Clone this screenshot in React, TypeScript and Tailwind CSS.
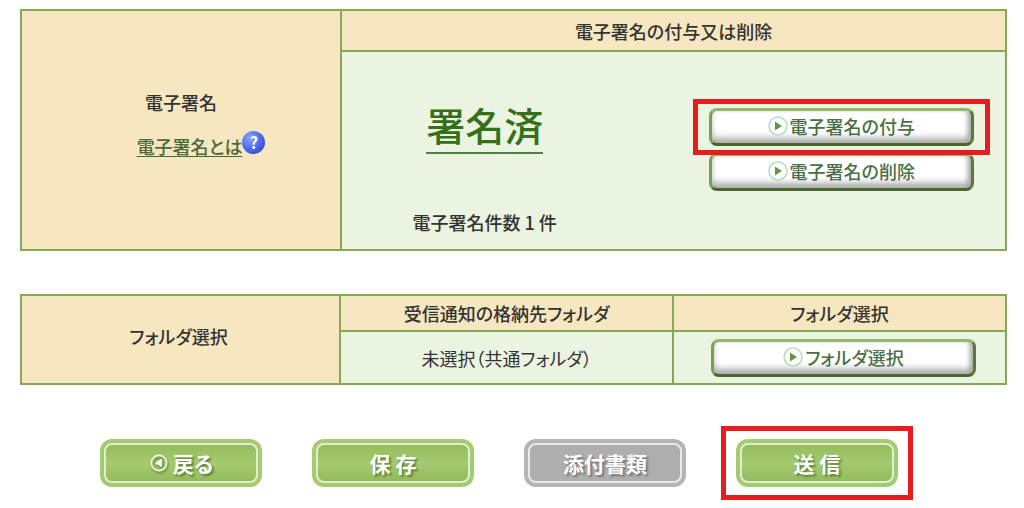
import React from 'react';

const headCell = 'border-2 border-[#86a956] bg-[#f7e7c0] font-medium';
const bodyCell = 'border-2 border-[#86a956] bg-[#ebf3e1]';

function PlayIcon() {
  return (
    <svg className="w-5 h-5 shrink-0" viewBox="0 0 20 20" aria-hidden="true">
      <circle cx="10" cy="10" r="9" fill="#fff" stroke="#b5dcc2" strokeWidth="1.5" />
      <path d="M7 5.5v9l7-4.5z" fill="#659440" />
    </svg>
  );
}

function BackIcon() {
  return (
    <svg className="w-5 h-5 shrink-0 drop-shadow-[1px_2px_1px_#5d8238]" viewBox="0 0 20 20" aria-hidden="true">
      <circle cx="10" cy="10" r="7.6" fill="none" stroke="#f4f9ec" strokeWidth="1.6" />
      <path d="M12.8 5.8v8.4L6 10z" fill="#fff" />
    </svg>
  );
}

function PanelButton({ children }: { children: React.ReactNode }) {
  return (
    <button
      type="button"
      className="w-[265px] h-[38px] pb-[2px] flex items-center justify-center gap-[2px] rounded-lg border-[3px] border-t-[#95b46f] border-l-[#7d9f53] border-r-[#587a38] border-b-[#49662c] bg-white shadow-[inset_-3px_-2px_5px_#aaa,inset_0_-6px_6px_#c4c4c4] text-[18px] font-medium text-[#4b6e45]"
    >
      <PlayIcon />
      {children}
    </button>
  );
}

function ActionButton({ children, disabled }: { children: React.ReactNode; disabled?: boolean }) {
  return (
    <button
      type="button"
      disabled={disabled}
      className={
        disabled
          ? 'w-[162px] h-12 p-1 rounded-xl bg-[#b5b5b5] text-white'
          : 'w-[162px] h-12 p-1 rounded-xl bg-[#a5cb72] text-white'
      }
    >
      <span
        className={
          disabled
            ? 'h-full flex items-center justify-center rounded-lg border-2 border-[#e9e9e9] bg-[#aeaeae] text-[21px] font-bold [text-shadow:2px_2px_2px_#777]'
            : 'h-full flex items-center justify-center gap-1 rounded-lg border-2 border-[#e0eece] bg-linear-to-b from-[#94bd5c] via-[#a5ca70] to-[#94bb5c] text-[21px] font-bold [text-shadow:2px_2px_2px_#5d8238]'
        }
      >
        {children}
      </span>
    </button>
  );
}

export default function App() {
  return (
    <main className="bg-white pt-[9px] pb-5 pl-5 pr-[17px] font-['Noto_Sans_CJK_JP',sans-serif] [font-feature-settings:'palt'] text-[18px] leading-6 text-[#333]">
      {/* Signature */}
      <table className="w-full table-fixed border-collapse text-center">
        <tbody>
          <tr className="h-[41px]">
            <th rowSpan={2} scope="rowgroup" className={`${headCell} w-[32.5%] pb-3`}>
              <p>電子署名</p>
              <p className="mt-3 pl-10 flex items-center justify-center">
                <a href="#about-signature" className="mt-2 underline underline-offset-2 text-[#466a3c]">
                  電子署名とは
                </a>
                <span className="w-[23px] h-[23px] flex items-center justify-center rounded-full bg-radial-[at_35%_30%] from-[#8aa5ff] via-[#4e69ee] to-[#2c3db0] text-base font-bold text-white">
                  ?
                </span>
              </p>
            </th>
            <th scope="col" className={headCell}>電子署名の付与又は削除</th>
          </tr>
          <tr className="h-[199px]">
            <td className={bodyCell}>
              <div className="flex justify-between">
                <div className="w-[43%] pt-8 flex flex-col items-center font-medium">
                  <strong className="border-b-2 border-[#4f8040] pb-1 text-[39px] leading-[48px] font-medium text-[#357018]">
                    署名済
                  </strong>
                  <p className="mt-14">電子署名件数 1 件</p>
                </div>
                <div className="w-1/2 pt-10 pl-1 flex flex-col items-center gap-[7px]">
                  <div className="relative z-10">
                    <PanelButton>電子署名の付与</PanelButton>
                    <span className="absolute -inset-x-4 -inset-y-[9px] border-[5px] border-[#e81c1c] pointer-events-none" />
                  </div>
                  <PanelButton>電子署名の削除</PanelButton>
                </div>
              </div>
            </td>
          </tr>
        </tbody>
      </table>

      {/* Folder */}
      <table className="mt-[43px] w-full table-fixed border-collapse text-center">
        <tbody>
          <tr className="h-9">
            <th rowSpan={2} scope="rowgroup" className={`${headCell} w-[32.4%] pr-1 pb-2`}>フォルダ選択</th>
            <th scope="col" className={headCell}>受信通知の格納先フォルダ</th>
            <th scope="col" className={headCell}>フォルダ選択</th>
          </tr>
          <tr className="h-[53px]">
            <td className={bodyCell}>未選択（共通フォルダ）</td>
            <td className={bodyCell}>
              <div className="pl-2 flex justify-center">
                <PanelButton>フォルダ選択</PanelButton>
              </div>
            </td>
          </tr>
        </tbody>
      </table>

      {/* Actions */}
      <div className="mt-[54px] pl-20 flex gap-[50px]">
        <ActionButton>
          <BackIcon />
          戻る
        </ActionButton>
        <ActionButton>保 存</ActionButton>
        <ActionButton disabled>添付書類</ActionButton>
        <div className="relative">
          <ActionButton>送 信</ActionButton>
          <span className="absolute -inset-x-[15px] -inset-y-[13px] border-[5px] border-[#e81c1c] pointer-events-none" />
        </div>
      </div>
    </main>
  );
}
